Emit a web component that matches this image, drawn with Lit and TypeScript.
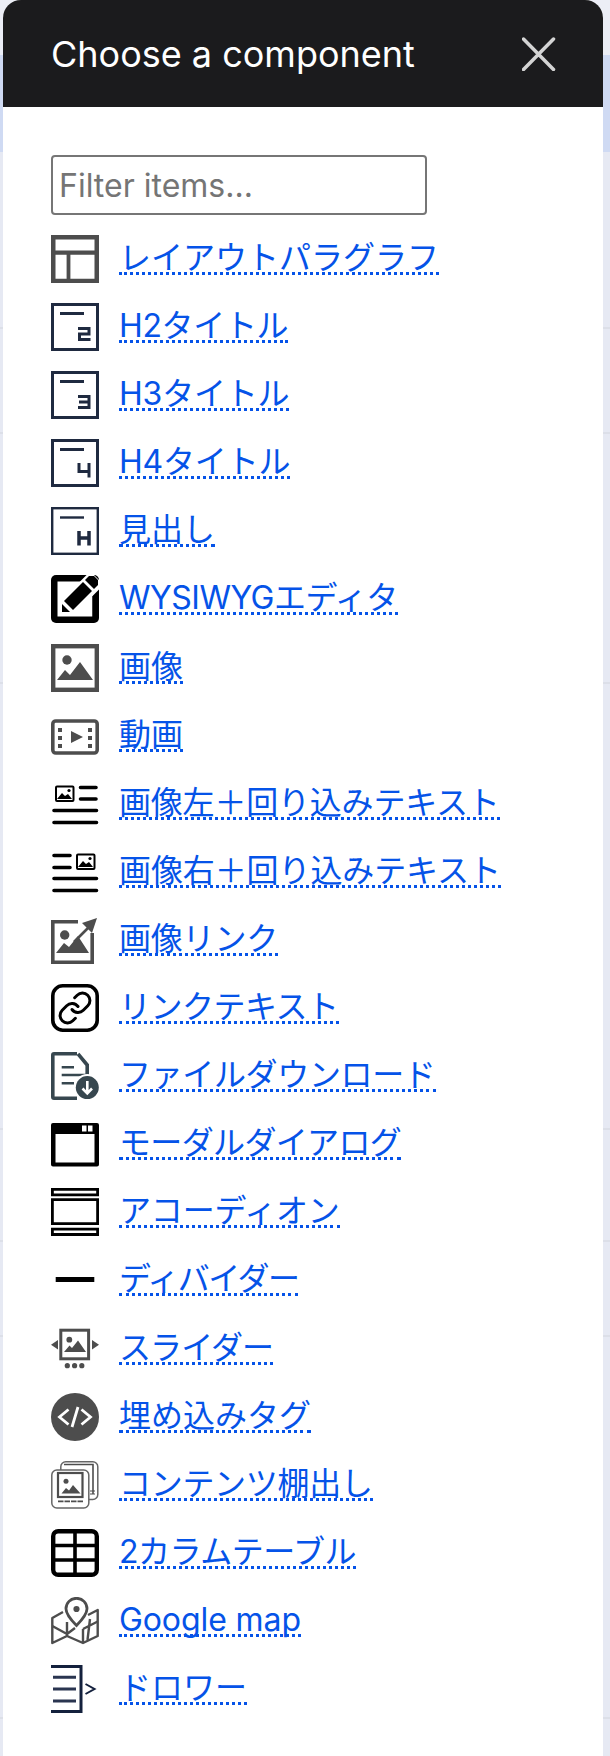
import { LitElement, html, css, svg } from "lit";
import { customElement, state } from "lit/decorators.js";

const G = "#4d4d4d";
const N = "#1f2a40";
const mountains = (pts: string, fill = G) => svg`<polygon points=${pts} fill=${fill}></polygon>`;
const heading = (d: string, w = 3, box = 3) => svg`
  <rect x=${box / 2} y=${box / 2} width=${48 - box} height=${48 - box} fill="#fff" stroke=${N} stroke-width=${box}></rect>
  <path d="M9 10.5H33" stroke=${N} stroke-width=${box} fill="none"></path>
  <path d=${d} stroke=${N} stroke-width=${w} fill="none"></path>`;

const ICONS: Record<string, unknown> = {
  layout: svg`<path fill-rule="evenodd" fill=${G} d="M0 0H48V48H0ZM4.5 4.5V15.5H43.5V4.5ZM4.5 19.7V43.7H15.6V19.7ZM19.4 19.7V43.7H43.5V19.7Z"></path>`,
  h2: heading("M27 25.5H38V31H28.5V36.5H39.5"),
  h3: heading("M27 25.5H38V36.5H27M28 31H38"),
  h4: heading("M28 24V32.5H38M38 24V38.5"),
  h: heading("M28 24V38.5M38 24V38.5M28 31H38", 3.5, 2.4),
  wysiwyg: svg`
    <rect width="48" height="48" rx="5" fill="#000"></rect>
    <rect x="6.5" y="6.5" width="35" height="35" fill="#fff"></rect>
    <path d="M16 33L46 3" stroke="#fff" stroke-width="19"></path>
    <rect x="41.5" y="21" width="6.5" height="22" fill="#000"></rect>
    <polygon points="13,26 22,35 41,16 32,7" fill="#000"></polygon>
    <polygon points="34,5 43,14 47,10 47,5 43,1 38,1" fill="#000"></polygon>
    <polygon points="11,29 19,37 11,37" fill="#000"></polygon>`,
  image: svg`
    <rect x="2.2" y="2.2" width="43.6" height="43.6" fill="none" stroke=${G} stroke-width="4.4"></rect>
    <circle cx="16" cy="16" r="4.7" fill=${G}></circle>
    ${mountains("6,36 14,26 19,31 29,18 42,36")}`,
  video: svg`
    <rect x="1.8" y="9" width="44.4" height="32" rx="3" fill="none" stroke=${G} stroke-width="3.6"></rect>
    <path d="M7 16h4v4h-4zM7 24h4v4h-4zM7 32h4v4h-4zM37 16h4v4h-4zM37 24h4v4h-4zM37 32h4v4h-4z" fill=${G}></path>
    <polygon points="20,19 32,25 20,31" fill=${G}></polygon>`,
  imageLeft: svg`
    <rect x="5" y="6.5" width="17.5" height="14.5" rx="1" fill="#fff" stroke="#000" stroke-width="2"></rect>
    <circle cx="18" cy="10.5" r="1.6" fill="#000"></circle>
    ${mountains("6,19 11,13 14,16 17,14 21,19", "#000")}
    <path d="M29.5 7.5H45M29.5 19H45M3 30.5H45.5M3 42.5H45.5" stroke="#000" stroke-width="3.6" stroke-linecap="round"></path>`,
  imageRight: svg`
    <rect x="26" y="6.5" width="17.5" height="14.5" rx="1" fill="#fff" stroke="#000" stroke-width="2"></rect>
    <circle cx="39" cy="10.5" r="1.6" fill="#000"></circle>
    ${mountains("27,19 32,13 35,16 38,14 42,19", "#000")}
    <path d="M3 7.5H19M3 19.5H19M3 30.5H45.5M3 42.5H45.5" stroke="#000" stroke-width="3.6" stroke-linecap="round"></path>`,
  imageLink: svg`
    <path d="M27 5.8H1.8V46.2H41.2V17" fill="none" stroke=${G} stroke-width="3.6"></path>
    <circle cx="13.7" cy="19" r="4.7" fill=${G}></circle>
    ${mountains("5,37 13,27 18,31 27,20 38,37")}
    <path d="M23 26L37 12" stroke=${G} stroke-width="2.6"></path>
    <polygon points="46,2 31,7 41,17" fill=${G}></polygon>`,
  linkText: svg`
    <rect x="1.8" y="1.8" width="44.4" height="44.4" rx="10" fill="none" stroke="#000" stroke-width="3.6"></rect>
    <g transform="translate(6 6) scale(1.5)" fill="none" stroke="#000" stroke-width="2" stroke-linecap="round" stroke-linejoin="round">
      <path d="M10 13a5 5 0 0 0 7.54.54l3-3a5 5 0 0 0-7.07-7.07l-1.72 1.71"></path>
      <path d="M14 11a5 5 0 0 0-7.54-.54l-3 3a5 5 0 0 0 7.07 7.07l1.71-1.71"></path>
    </g>`,
  file: svg`
    <path d="M26 1.8H3a1.2 1.2 0 0 0-1.2 1.2V45a1.2 1.2 0 0 0 1.2 1.2H26M27 1.8L36.2 13V24" fill="none" stroke="#37474f" stroke-width="3.6"></path>
    <path d="M10.7 15.3H23M10.7 23H35M10.7 31.3H23" stroke="#37474f" stroke-width="2.4"></path>
    <circle cx="36.3" cy="35.6" r="13.5" fill="#fff"></circle>
    <circle cx="36.3" cy="35.6" r="11.5" fill="#37474f"></circle>
    <path d="M36.3 29V41M31.5 36.5L36.3 41.3L41 36.5" fill="none" stroke="#fff" stroke-width="2.6"></path>`,
  modal: svg`
    <path fill-rule="evenodd" d="M2 3H46a2 2 0 0 1 2 2V44.5a2 2 0 0 1-2 2H2a2 2 0 0 1-2-2V5a2 2 0 0 1 2-2ZM4.5 14V42.5H43.5V14Z" fill="#000"></path>
    <path d="M31 5.5h4.5v6H31zM37 5.5h4.5v6H37z" fill="#fff"></path>`,
  accordion: svg`
    <path d="M1.4 1.4H46.6V6.8H1.4ZM1.4 11.7H46.6V35.6H1.4ZM1.4 41.1H46.6V46.5H1.4Z" fill="none" stroke="#000" stroke-width="2.8"></path>`,
  divider: svg`<rect x="4.7" y="21" width="38.6" height="5" fill="#000"></rect>`,
  slider: svg`
    <rect x="9.8" y="5.2" width="27.8" height="28.6" fill="none" stroke=${G} stroke-width="3"></rect>
    <circle cx="18.3" cy="14.7" r="2.9" fill=${G}></circle>
    ${mountains("13,27 18.5,20.5 21,23 27,15.5 35,27")}
    <polygon points="0,19.7 7,15 7,24.4" fill=${G}></polygon>
    <polygon points="48,19.7 41,15 41,24.4" fill=${G}></polygon>
    <circle cx="16.3" cy="40.7" r="2.6" fill=${G}></circle>
    <circle cx="23.6" cy="40.7" r="2.6" fill=${G}></circle>
    <circle cx="30.8" cy="40.7" r="2.6" fill=${G}></circle>`,
  embed: svg`
    <circle cx="24" cy="24" r="24" fill=${G}></circle>
    <path d="M17.5 16.5L8.5 24L17.5 31.5M27 14L21 34M30.5 16.5L39.5 24L30.5 31.5" fill="none" stroke="#fff" stroke-width="2.8"></path>`,
  contents: svg`
    <rect x="9.8" y="0.8" width="37" height="37.6" rx="5" fill="#fff" stroke="#666" stroke-width="1.5"></rect>
    <path d="M13 3.5H42V33" fill="none" stroke=${G} stroke-width="1.6"></path>
    <path d="M39 30h5M39 33h5" stroke=${G} stroke-width="1.2"></path>
    <rect x="0.8" y="9" width="37" height="38" rx="5" fill="#fff" stroke="#666" stroke-width="1.5"></rect>
    <rect x="7" y="12" width="24.5" height="24" fill="none" stroke=${G} stroke-width="2.2"></rect>
    <circle cx="15" cy="20.3" r="2.5" fill=${G}></circle>
    ${mountains("10.5,32.5 15,27 18,29.5 22,24 29.5,32.5")}
    <path d="M7 40.3H33" stroke=${G} stroke-width="1.8" stroke-dasharray="5.5 1"></path>`,
  table: svg`
    <rect x="2.2" y="2.2" width="43.6" height="43.6" rx="5" fill="none" stroke="#000" stroke-width="4.4"></rect>
    <path d="M24 3V45M3 16.5H45M3 31H45" stroke="#000" stroke-width="3.6"></path>`,
  map: svg`
    <g fill="none" stroke=${G} stroke-width="2.4" stroke-linejoin="round">
      <path d="M12 15L1.3 21V46L16 39L32 46L46.7 39V13L37 18"></path>
      <path d="M16 25V39M32 32V46M1.3 29L16 37M16 37L24 31M32 32L46.7 24.5M39 22L36.5 43"></path>
    </g>
    <path d="M25.5 1.3C19.5 1.3 15 6 15 11.8C15 17.5 20 23 25.5 28.5C31 23 36 17.5 36 11.8C36 6 31.5 1.3 25.5 1.3Z" fill="#fff" stroke=${G} stroke-width="2.8"></path>
    <circle cx="25.5" cy="12" r="3.1" fill=${G}></circle>`,
  drawer: svg`
    <path d="M0 1.5H30V46.5H0" fill="none" stroke="#14213d" stroke-width="3"></path>
    <path d="M2 12.3H25M2 24H25M2 36H25" stroke="#2a3550" stroke-width="3"></path>
    <path d="M34.5 19L43.5 24L34.5 29" fill="none" stroke="#14213d" stroke-width="2"></path>`,
};

const ITEMS: [string, string, number][] = [
  ["layout", "レイアウトパラグラフ", 0],
  ["h2", "H2タイトル", -0.35],
  ["h3", "H3タイトル", -0.2],
  ["h4", "H4タイトル", -0.2],
  ["h", "見出し", 0],
  ["wysiwyg", "WYSIWYGエディタ", -0.5],
  ["image", "画像", 0],
  ["video", "動画", 0],
  ["imageLeft", "画像左＋回り込みテキスト", -0.2],
  ["imageRight", "画像右＋回り込みテキスト", -0.1],
  ["imageLink", "画像リンク", -0.2],
  ["linkText", "リンクテキスト", -0.5],
  ["file", "ファイルダウンロード", -0.35],
  ["modal", "モーダルダイアログ", -0.65],
  ["accordion", "アコーディオン", -0.15],
  ["divider", "ディバイダー", -1.5],
  ["slider", "スライダー", -0.9],
  ["embed", "埋め込みタグ", 0],
  ["contents", "コンテンツ棚出し", -0.3],
  ["table", "2カラムテーブル", -0.45],
  ["map", "Google map", -0.1],
  ["drawer", "ドロワー", 0],
];

@customElement("app-root")
export class AppRoot extends LitElement {
  @state() private filter = "";

  static styles = css`
    :host {
      display: block;
      min-height: 100vh;
      padding: 0 7px 0 3px;
      box-sizing: border-box;
      font-family: Inter, "Noto Sans CJK JP", sans-serif;
      background: linear-gradient(
        to bottom,
        #eceef6 0 55px,
        #cfdaf3 55px 152px,
        #e6e9f3 152px 327px,
        #dcdfe8 327px 329px,
        #e6e9f3 329px 432px,
        #dcdfe8 432px 434px,
        #e6e9f3 434px 682px,
        #dcdfe8 682px 684px,
        #e6e9f3 684px 1128px,
        #dcdfe8 1128px 1130px,
        #e6e9f3 1130px 1240px,
        #dcdfe8 1240px 1242px,
        #e6e9f3 1242px 1335px,
        #dcdfe8 1335px 1337px,
        #e6e9f3 1337px 1717px,
        #dcdfe8 1717px 1719px,
        #e6e9f3 1719px
      );
    }
    .dialog {
      display: flex;
      flex-direction: column;
      min-height: 100vh;
      background: #fff;
      border-radius: 18px 18px 0 0;
      overflow: hidden;
    }
    .head {
      display: flex;
      align-items: center;
      justify-content: space-between;
      height: 107px;
      padding: 0 47px 0 48px;
      box-sizing: border-box;
      background: #1b1b1d;
      color: #fff;
    }
    .title {
      margin: 0;
      font-size: 36px;
      font-weight: 400;
      line-height: 40px;
    }
    .close {
      display: block;
      width: 34px;
      height: 34px;
      padding: 0;
      border: 0;
      background: none;
    }
    .close svg {
      display: block;
    }
    .body {
      display: flex;
      flex-direction: column;
      align-items: flex-start;
      padding: 48px 0 0 48px;
    }
    .filter {
      width: 375.5px;
      height: 60px;
      margin-bottom: 20px;
      padding: 0 6px;
      box-sizing: border-box;
      border: 2px solid #767676;
      border-radius: 4px;
      font: 400 32px Inter, sans-serif;
      color: #222;
      background: #fff;
      outline: none;
    }
    .filter::placeholder {
      color: #757575;
      opacity: 1;
    }
    .list {
      display: flex;
      flex-direction: column;
      margin: 0;
      padding: 0;
      list-style: none;
    }
    .row {
      display: flex;
      align-items: flex-start;
      gap: 20px;
      height: 68.1px;
    }
    .icon {
      display: block;
      flex: none;
      width: 48px;
      height: 48px;
    }
    .link {
      display: block;
      height: 37px;
      font-size: 32px;
      line-height: 46px;
      white-space: nowrap;
      color: #0553e8;
      text-decoration: none;
      border-bottom: 3px dotted #0553e8;
    }
  `;

  render() {
    const q = this.filter.trim().toLowerCase();
    const items = ITEMS.filter(([, label]) => label.toLowerCase().includes(q));
    return html`
      <section class="dialog">
        <header class="head">
          <h2 class="title">Choose a component</h2>
          <button class="close" aria-label="Close">
            <svg width="34" height="34" viewBox="0 0 34 34">
              <path d="M1.5 2L31.5 32.5M31.5 2L1.5 32.5" stroke="#d4d4d4" stroke-width="3.5" stroke-linecap="round"></path>
            </svg>
          </button>
        </header>
        <div class="body">
          <input
            class="filter"
            placeholder="Filter items..."
            .value=${this.filter}
            @input=${(e: Event) => (this.filter = (e.target as HTMLInputElement).value)}
          />
          <ul class="list">
            ${items.map(
              ([icon, label, tracking]) => html`
                <li class="row">
                  <svg class="icon" viewBox="0 0 48 48">${ICONS[icon]}</svg>
                  <a class="link" href="#" style="letter-spacing:${tracking}px">${label}</a>
                </li>
              `
            )}
          </ul>
        </div>
      </section>
    `;
  }
}
